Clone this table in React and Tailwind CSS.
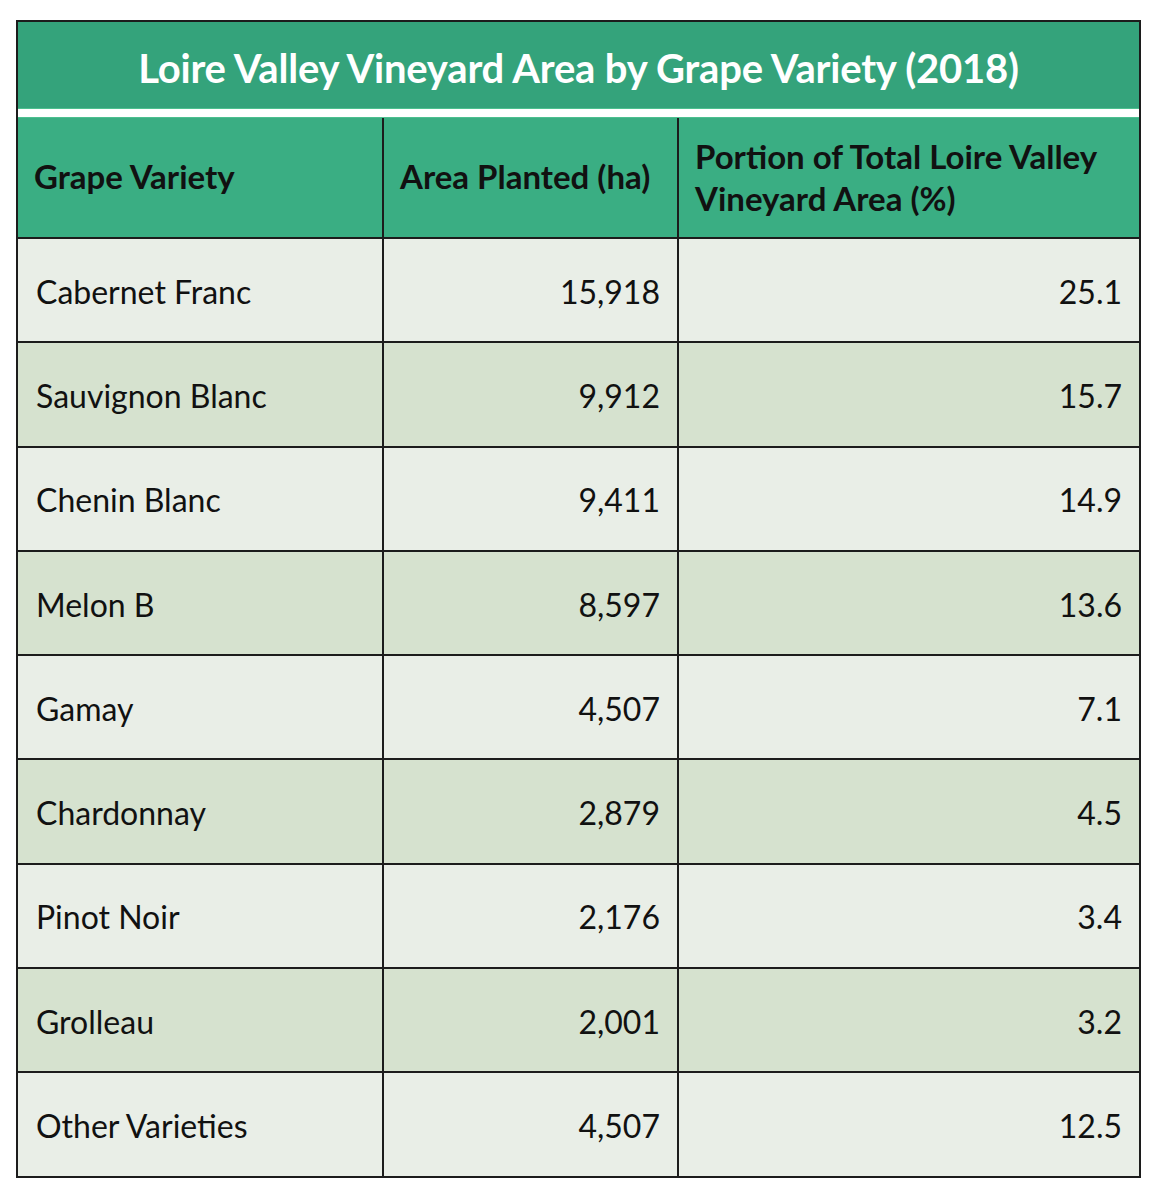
const rows = [
  ['Cabernet Franc', '15,918', '25.1'],
  ['Sauvignon Blanc', '9,912', '15.7'],
  ['Chenin Blanc', '9,411', '14.9'],
  ['Melon B', '8,597', '13.6'],
  ['Gamay', '4,507', '7.1'],
  ['Chardonnay', '2,879', '4.5'],
  ['Pinot Noir', '2,176', '3.4'],
  ['Grolleau', '2,001', '3.2'],
  ['Other Varieties', '4,507', '12.5'],
];

const App = () => {
  return (
    <div className="min-h-[1200px] bg-white pt-[20px] pl-[16px] font-['Lato',sans-serif]">
      <div className="w-[1125px] border-2 border-[#1c1c1c]">
        {/* Title */}
        <div className="h-[86px] bg-[#34a37b] flex items-center justify-center pt-[6px]">
          <h1 className="text-[40px] font-bold text-white tracking-[-0.2px]">
            Loire Valley Vineyard Area by Grape Variety (2018)
          </h1>
        </div>
        <div className="h-[10px] bg-white border-y border-[#4cc08f]" />

        {/* Header */}
        <div className="grid grid-cols-[366px_295px_1fr] h-[119px] bg-[#3aae83] text-[#111] font-bold text-[33px] leading-[42px]">
          <div className="border-r-2 border-[#1c1c1c] flex items-center pl-[16px] pb-[4px]">Grape Variety</div>
          <div className="border-r-2 border-[#1c1c1c] flex items-center pl-[16px] pb-[4px]">Area Planted (ha)</div>
          <div className="flex items-center pl-[16px] pr-[20px] pb-[2px]">
            <span>Portion of Total Loire Valley Vineyard Area (%)</span>
          </div>
        </div>

        {/* Body */}
        {rows.map(([name, area, pct], i) => (
          <div
            key={name}
            className={`grid grid-cols-[366px_295px_1fr] h-[104.3px] border-t-2 border-[#1c1c1c] text-[32px] text-[#111] ${
              i % 2 === 0 ? 'bg-[#e9eee7]' : 'bg-[#d6e2cf]'
            }`}
          >
            <div className="border-r-2 border-[#1c1c1c] flex items-center pl-[18px] pt-[3px]">{name}</div>
            <div className="border-r-2 border-[#1c1c1c] flex items-center justify-end pr-[17px] pt-[3px]">{area}</div>
            <div className="flex items-center justify-end pr-[17px] pt-[3px]">{pct}</div>
          </div>
        ))}
      </div>
    </div>
  );
};

export default App;
